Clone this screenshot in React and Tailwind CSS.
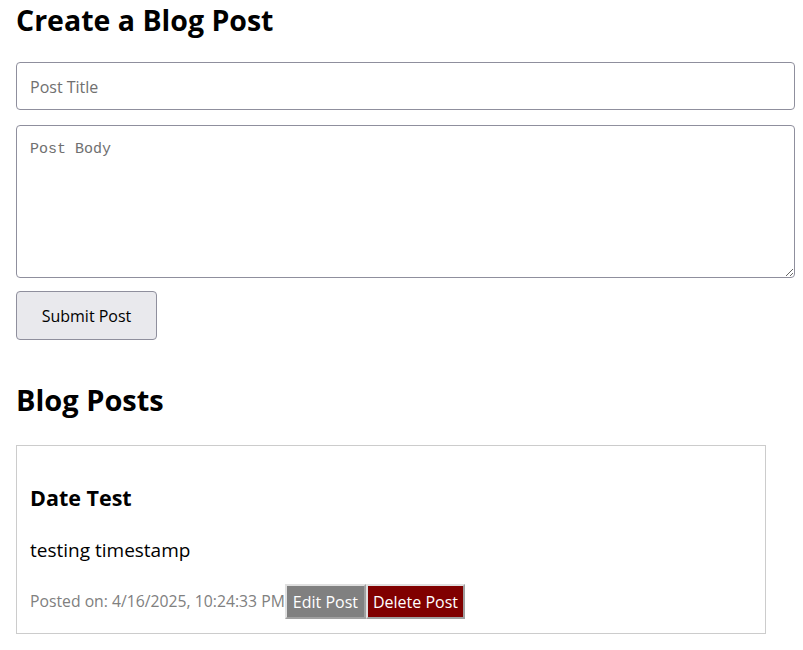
export default function App() {
  return (
    <div className="min-h-screen bg-white px-4 text-black" style={{ fontFamily: '"Open Sans", "Noto Sans", sans-serif' }}>
      {/* Create form */}
      <h1 className="pt-[2px] text-[28.5px] font-bold leading-[36px]">Create a Blog Post</h1>
      <form className="mt-[24px] flex w-[779px] flex-col" onSubmit={(e) => e.preventDefault()}>
        <input
          type="text"
          placeholder="Post Title"
          className="h-[48px] w-full rounded-[4px] border border-[#8f8f9d] px-[13px] pt-[2px] text-[16px] outline-none placeholder:text-[#707070]"
        />
        <textarea
          placeholder="Post Body"
          className="mt-[15px] h-[153px] w-full rounded-[4px] border border-[#8f8f9d] px-[13px] pt-[15px] text-[15px] leading-[18px] outline-none placeholder:text-[#707070]"
          style={{ fontFamily: '"Liberation Mono", "DejaVu Sans Mono", monospace' }}
        />
        <button
          type="submit"
          className="mt-[13px] h-[49px] w-[141px] rounded-[4px] border border-[#8f8f9d] bg-[#e9e9ed] text-[16px]"
        >
          Submit Post
        </button>
      </form>

      {/* Posts */}
      <h2 className="mt-[42px] text-[29px] font-bold leading-[36px]">Blog Posts</h2>
      <div className="mt-[27px] w-[750px] border border-[#cccccc] px-[13px] pt-[37px] pb-[14px]">
        <h3 className="text-[21.5px] font-bold leading-[30px]">Date Test</h3>
        <p className="mt-[24px] text-[19px] leading-[26px]">testing timestamp</p>
        <div className="mt-[21px] flex items-center">
          <span className="text-[15.75px] text-[#808080]">Posted on: 4/16/2025, 10:24:33 PM</span>
          <button className="h-[35px] border-2 border-t-[#e0e0e0] border-l-[#e0e0e0] border-r-[#a0a0a0] border-b-[#a0a0a0] bg-[#808080] px-[6px] text-[16px] text-white">
            Edit Post
          </button>
          <button className="h-[35px] border-2 border-t-[#e0e0e0] border-l-[#e0e0e0] border-r-[#a0a0a0] border-b-[#a0a0a0] bg-[#800000] px-[5px] text-[16px] text-white">
            Delete Post
          </button>
        </div>
      </div>
    </div>
  )
}
